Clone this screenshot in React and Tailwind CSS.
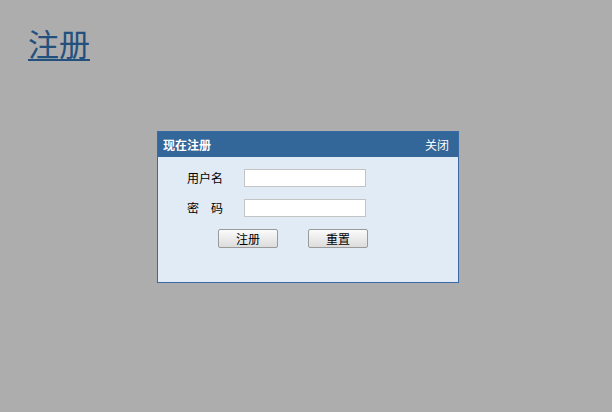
export default function App() {
  const cjk = { fontFamily: '"Noto Sans CJK SC", "Noto Sans", sans-serif' };
  return (
    <div className="w-full h-[412px] bg-[#adadad] flex flex-col" style={cjk}>
      <div className="h-[131px] pl-[28px] pt-[27px]">
        <a href="#" className="text-[31px] leading-[31px] text-[#24507e] underline decoration-[2px] underline-offset-[3px]">
          注册
        </a>
      </div>
      <div className="ml-[157px] w-[302px] h-[152px] border border-[#3a6aa5] flex flex-col">
        <div className="h-[25px] bg-[#336699] flex items-center justify-between pl-[5px] pr-[9px] text-white text-[12px]">
          <span className="font-bold">现在注册</span>
          <span>关闭</span>
        </div>
        <div className="flex-1 bg-[#e1ebf5] pt-[12px] flex flex-col gap-[12px] text-[12px] text-black">
          <div className="flex items-center h-[18px] pl-[29px]">
            <span className="w-[36px] leading-[18px]">用户名</span>
            <input className="ml-[21px] w-[122px] h-[18px] bg-white border border-[#c4c4c4] outline-none" />
          </div>
          <div className="flex items-center h-[18px] pl-[29px]">
            <span className="w-[36px] leading-[18px] whitespace-pre">密　码</span>
            <input type="password" className="ml-[21px] w-[122px] h-[18px] bg-white border border-[#c4c4c4] outline-none" />
          </div>
          <div className="flex items-center h-[19px] pl-[60px] gap-[30px]">
            <button className="w-[60px] h-[19px] border border-[#9a9a9a] rounded-[2px] bg-gradient-to-b from-[#fbfbfb] to-[#dcdcdc] text-[12px] leading-none flex items-center justify-center">
              注册
            </button>
            <button className="w-[60px] h-[19px] border border-[#9a9a9a] rounded-[2px] bg-gradient-to-b from-[#fbfbfb] to-[#dcdcdc] text-[12px] leading-none flex items-center justify-center">
              重置
            </button>
          </div>
        </div>
      </div>
    </div>
  );
}
